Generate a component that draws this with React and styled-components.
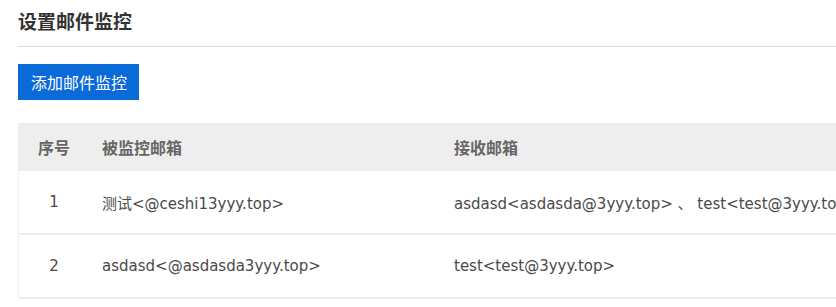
import styled, { createGlobalStyle } from "styled-components";

const GlobalStyle = createGlobalStyle`
  html, body {
    margin: 0;
    padding: 0;
    background: #fff;
    overflow: hidden;
  }
  body {
    font-family: "DejaVu Sans", "Noto Sans CJK SC", sans-serif;
  }
`;

const Page = styled.div`
  padding: 0 0 0 18px;
  width: 900px;
`;

const Header = styled.div`
  height: 46px;
  display: flex;
  align-items: center;
  border-bottom: 1px solid #dcdcdc;
`;

const Title = styled.h2`
  margin: 0;
  font-family: "Noto Sans CJK SC", sans-serif;
  font-size: 19px;
  font-weight: 700;
  color: #333;
  line-height: 22px;
  padding-bottom: 4px;
`;

const Toolbar = styled.div`
  padding: 17px 0 23px;
`;

const Button = styled.button`
  height: 36px;
  padding: 0 12px 0 13px;
  border: none;
  background-color: #0a6ad8;
  color: #fff;
  font-family: "Noto Sans CJK SC", sans-serif;
  font-size: 16px;
  cursor: pointer;
`;

const Table = styled.table`
  width: 100%;
  border-collapse: collapse;
  border-left: 1px solid #eeeeee;
  font-size: 15px;
`;

const Th = styled.th`
  height: 48px;
  background: #eeeeee;
  color: #666;
  font-family: "Noto Sans CJK SC", sans-serif;
  font-size: 16px;
  font-weight: 700;
  text-align: ${(p) => (p.center ? "center" : "left")};
  padding: 0 13px;
  width: ${(p) => p.w || "auto"};
`;

const Row = styled.tr`
  border-bottom: 2px solid #eeeeee;
`;

const Td = styled.td`
  height: 62px;
  color: #4a4a4a;
  text-align: ${(p) => (p.center ? "center" : "left")};
  padding: 0 13px;
  white-space: nowrap;
`;

const rows = [
  {
    id: 1,
    from: "测试<@ceshi13yyy.top>",
    to: "asdasd<asdasda@3yyy.top> 、 test<test@3yyy.top>",
  },
  { id: 2, from: "asdasd<@asdasda3yyy.top>", to: "test<test@3yyy.top>" },
];

export default function App() {
  return (
    <>
      <GlobalStyle />
      <Page>
        <Header>
          <Title>设置邮件监控</Title>
        </Header>
        <Toolbar>
          <Button>添加邮件监控</Button>
        </Toolbar>
        <Table>
          <thead>
            <tr>
              <Th center w="44px">序号</Th>
              <Th w="326px">被监控邮箱</Th>
              <Th>接收邮箱</Th>
            </tr>
          </thead>
          <tbody>
            {rows.map((r) => (
              <Row key={r.id}>
                <Td center>{r.id}</Td>
                <Td>{r.from}</Td>
                <Td>{r.to}</Td>
              </Row>
            ))}
          </tbody>
        </Table>
      </Page>
    </>
  );
}
